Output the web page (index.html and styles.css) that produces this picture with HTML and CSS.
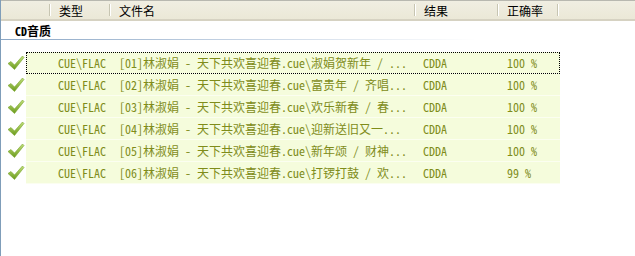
FILE: index.html
```html
<!DOCTYPE html>
<html>
<head>
<meta charset="utf-8">
<link rel="stylesheet" href="styles.css">
</head>
<body>
<div class="list">
  <div class="header">
    <div class="hcell"></div>
    <div class="hcell">类型</div>
    <div class="hcell">文件名</div>
    <div class="hcell">结果</div>
    <div class="hcell">正确率</div>
    <div class="hcell last"></div>
  </div>
  <div class="group">
    <div class="group-title">CD音质</div>
    <div class="group-line"></div>
  </div>
  <div class="rows">
    <div class="row">
      <div class="icon"><svg width="18" height="16" viewBox="0 0 18 16"><use href="#chk"/></svg></div>
      <div class="cells focused">
        <span></span><span>CUE\FLAC</span><span>[01]林淑娟 - 天下共欢喜迎春.cue\淑娟贺新年 / ...</span><span>CDDA</span><span>100 %</span>
      </div>
    </div>
    <div class="row">
      <div class="icon"><svg width="18" height="16" viewBox="0 0 18 16"><use href="#chk"/></svg></div>
      <div class="cells">
        <span></span><span>CUE\FLAC</span><span>[02]林淑娟 - 天下共欢喜迎春.cue\富贵年 / 齐唱...</span><span>CDDA</span><span>100 %</span>
      </div>
    </div>
    <div class="row">
      <div class="icon"><svg width="18" height="16" viewBox="0 0 18 16"><use href="#chk"/></svg></div>
      <div class="cells">
        <span></span><span>CUE\FLAC</span><span>[03]林淑娟 - 天下共欢喜迎春.cue\欢乐新春 / 春...</span><span>CDDA</span><span>100 %</span>
      </div>
    </div>
    <div class="row">
      <div class="icon"><svg width="18" height="16" viewBox="0 0 18 16"><use href="#chk"/></svg></div>
      <div class="cells">
        <span></span><span>CUE\FLAC</span><span>[04]林淑娟 - 天下共欢喜迎春.cue\迎新送旧又一...</span><span>CDDA</span><span>100 %</span>
      </div>
    </div>
    <div class="row">
      <div class="icon"><svg width="18" height="16" viewBox="0 0 18 16"><use href="#chk"/></svg></div>
      <div class="cells">
        <span></span><span>CUE\FLAC</span><span>[05]林淑娟 - 天下共欢喜迎春.cue\新年颂 / 财神...</span><span>CDDA</span><span>100 %</span>
      </div>
    </div>
    <div class="row">
      <div class="icon"><svg width="18" height="16" viewBox="0 0 18 16"><use href="#chk"/></svg></div>
      <div class="cells">
        <span></span><span>CUE\FLAC</span><span>[06]林淑娟 - 天下共欢喜迎春.cue\打锣打鼓 / 欢...</span><span>CDDA</span><span>99 %</span>
      </div>
    </div>
  </div>
</div>
<svg width="0" height="0" class="defs">
  <defs>
    <linearGradient id="g" x1="0" y1="0" x2="0" y2="1">
      <stop offset="0" stop-color="#c2e07a"/>
      <stop offset="1" stop-color="#6a9a1c"/>
    </linearGradient>
    <g id="chk">
      <path d="M1 8.5 L4 6.5 L7.5 10 L15.5 1 L17 2.5 L7.5 14.5 Z" fill="url(#g)" stroke="#79a52a" stroke-width="0.6" stroke-linejoin="round"/>
    </g>
  </defs>
</svg>
</body>
</html>
```
FILE: styles.css
```css
html, body {
  margin: 0;
  padding: 0;
  background: #ffffff;
}
.defs {
  position: absolute;
}
.list {
  width: 635px;
  height: 256px;
  box-sizing: border-box;
  border-left: 1px solid #7f9db9;
  font-family: "Noto Sans Mono CJK SC", "Noto Sans CJK SC", monospace;
  font-size: 12px;
  overflow: hidden;
}
.header {
  display: grid;
  grid-template-columns: 50px 60px 305px 83px 60px 1fr;
  height: 21px;
  box-sizing: border-box;
  background: linear-gradient(#f0eee2, #ebe8d7);
  border-top: 1px solid #b8b8b0;
  border-bottom: 2px solid #d6d2c2;
  margin-left: -1px;
}
.hcell {
  padding-left: 9px;
  padding-top: 2px;
  line-height: 16px;
  color: #000;
  position: relative;
}
.hcell::after {
  content: "";
  position: absolute;
  right: 0;
  top: 3px;
  bottom: 3px;
  width: 1px;
  background: #c7c5b2;
  box-shadow: 1px 0 0 #ffffff;
}
.hcell.last::after {
  display: none;
}
.group {
  height: 19px;
  display: flex;
  flex-direction: column;
}
.group-title {
  padding-left: 14px;
  padding-top: 2px;
  font-weight: bold;
  line-height: 16px;
  height: 18px;
  color: #000;
}
.group-line {
  height: 1px;
  background: linear-gradient(90deg, #8aa6c5, #c9d6e6 40%, #ffffff 75%);
}
.rows {
  padding-top: 12px;
  display: flex;
  flex-direction: column;
}
.row {
  display: flex;
  height: 22px;
}
.icon {
  width: 25px;
  display: flex;
  align-items: center;
  padding-left: 6px;
  box-sizing: border-box;
}
.icon svg {
  display: block;
}
.cells {
  display: grid;
  grid-template-columns: 25px 60px 305px 83px 61px;
  background: #f5fcdc;
  border-bottom: 1px solid #fbfef0;
  box-sizing: border-box;
  color: #7f8c1a;
  line-height: 21px;
  white-space: nowrap;
}
.cells span {
  padding-left: 7px;
  overflow: hidden;
}
.cells span:nth-child(3),
.cells span:nth-child(5) {
  padding-left: 8px;
}
.focused {
  outline: 1px dotted #000;
  outline-offset: -1px;
}
```
